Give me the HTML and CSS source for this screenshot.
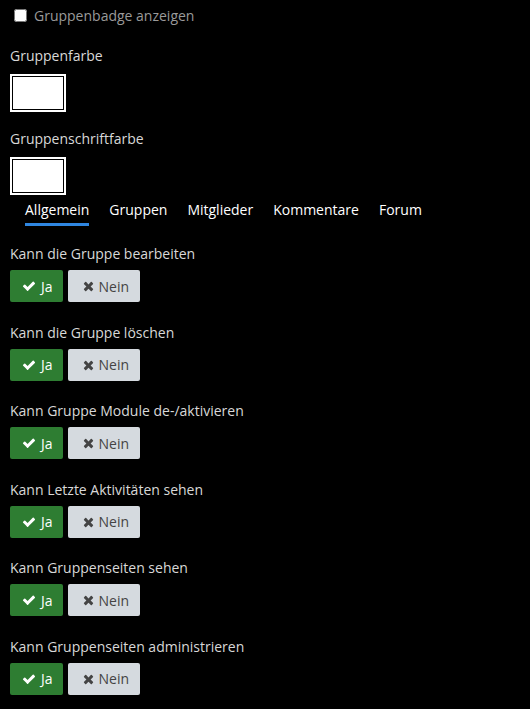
FILE: index.html
```html
<!DOCTYPE html>
<html lang="de">
<head>
    <meta charset="UTF-8">
    <meta name="viewport" content="width=device-width, initial-scale=1.0">
    <title>Gruppeneinstellungen</title>
    <link rel="stylesheet" href="styles.css">
</head>
<body>
    <div class="container">
        <label class="check-row">
            <input type="checkbox">
            <span>Gruppenbadge anzeigen</span>
        </label>

        <div class="field">
            <div class="field-label">Gruppenfarbe</div>
            <div class="swatch"></div>
        </div>

        <div class="field">
            <div class="field-label">Gruppenschriftfarbe</div>
            <div class="swatch"></div>
        </div>

        <ul class="tabs">
            <li class="tab active">Allgemein</li>
            <li class="tab">Gruppen</li>
            <li class="tab">Mitglieder</li>
            <li class="tab">Kommentare</li>
            <li class="tab">Forum</li>
        </ul>

        <div id="permList" class="perm-list"></div>
    </div>

    <script>
        const permissions = [
            'Kann die Gruppe bearbeiten',
            'Kann die Gruppe löschen',
            'Kann Gruppe Module de-/aktivieren',
            'Kann Letzte Aktivitäten sehen',
            'Kann Gruppenseiten sehen',
            'Kann Gruppenseiten administrieren'
        ];

        const checkIcon = '<svg class="icon" width="14" height="14" viewBox="0 0 1792 1792"><path fill="currentColor" d="M1671 566q0 40-28 68l-724 724-136 136q-28 28-68 28t-68-28l-136-136-362-362q-28-28-28-68t28-68l136-136q28-28 68-28t68 28l294 295 656-657q28-28 68-28t68 28l136 136q28 28 28 68z"/></svg>';
        const timesIcon = '<svg class="icon" width="11" height="14" viewBox="0 0 1408 1792"><path fill="currentColor" d="M1298 1322q0 40-28 68l-136 136q-28 28-68 28t-68-28l-294-294-294 294q-28 28-68 28t-68-28l-136-136q-28-28-28-68t28-68l294-294-294-294q-28-28-28-68t28-68l136-136q28-28 68-28t68 28l294 294 294-294q28-28 68-28t68 28l136 136q28 28 28 68t-28 68l-294 294 294 294q28 28 28 68z"/></svg>';

        function renderPermissions() {
            const list = document.getElementById('permList');
            permissions.forEach(name => {
                const row = document.createElement('div');
                row.className = 'perm-row';
                row.innerHTML = `
                    <div class="field-label">${name}</div>
                    <div class="btn-group">
                        <button class="btn btn-yes">${checkIcon}<span>Ja</span></button>
                        <button class="btn btn-no">${timesIcon}<span>Nein</span></button>
                    </div>
                `;
                list.appendChild(row);
            });
        }

        document.addEventListener('DOMContentLoaded', renderPermissions);
    </script>
</body>
</html>
```

FILE: styles.css
```css
body {
    font-family: 'Open Sans', 'Liberation Sans', sans-serif;
    font-size: 14px;
    background-color: #000;
    color: #d8d8d8;
    margin: 0;
    padding: 0;
}
.container {
    padding: 5px 10px 0 10px;
}
.check-row {
    display: flex;
    align-items: center;
    height: 21px;
    color: #9a9a9a;
}
.check-row input {
    width: 13px;
    height: 13px;
    margin: 0 7px 0 4px;
}
.field {
    margin-top: 19px;
}
.field-label {
    line-height: 21px;
    height: 21px;
}
.field + .field {
    margin-top: 16px;
}
.swatch {
    width: 56px;
    height: 38px;
    box-sizing: border-box;
    margin-top: 8px;
    border: 2px solid #fff;
    padding: 1px;
    background: #fff;
    background-clip: content-box;
}
.tabs {
    list-style-type: none;
    display: flex;
    gap: 20px;
    margin: 4px 0 0 0;
    padding: 0 0 0 15px;
}
.tab {
    color: #fff;
    line-height: 21px;
    padding-bottom: 3px;
    border-bottom: 3px solid transparent;
}
.tab.active {
    border-bottom-color: #2f86e0;
}
.perm-list {
    margin-top: 17px;
}
.perm-row {
    margin-bottom: 19.6px;
}
.btn-group {
    display: flex;
    gap: 5px;
    margin-top: 6px;
}
.btn {
    display: inline-flex;
    align-items: center;
    gap: 5px;
    height: 32px;
    padding: 0 10px 0 12px;
    border: none;
    border-radius: 2px;
    font-family: inherit;
    font-size: 14px;
    cursor: pointer;
}
.btn-yes {
    background-color: #2e7d32;
    color: #fff;
}
.btn-no {
    background-color: #d5dadf;
    color: #444;
    padding: 0 11px 0 15px;
}
.icon {
    display: block;
}
```
